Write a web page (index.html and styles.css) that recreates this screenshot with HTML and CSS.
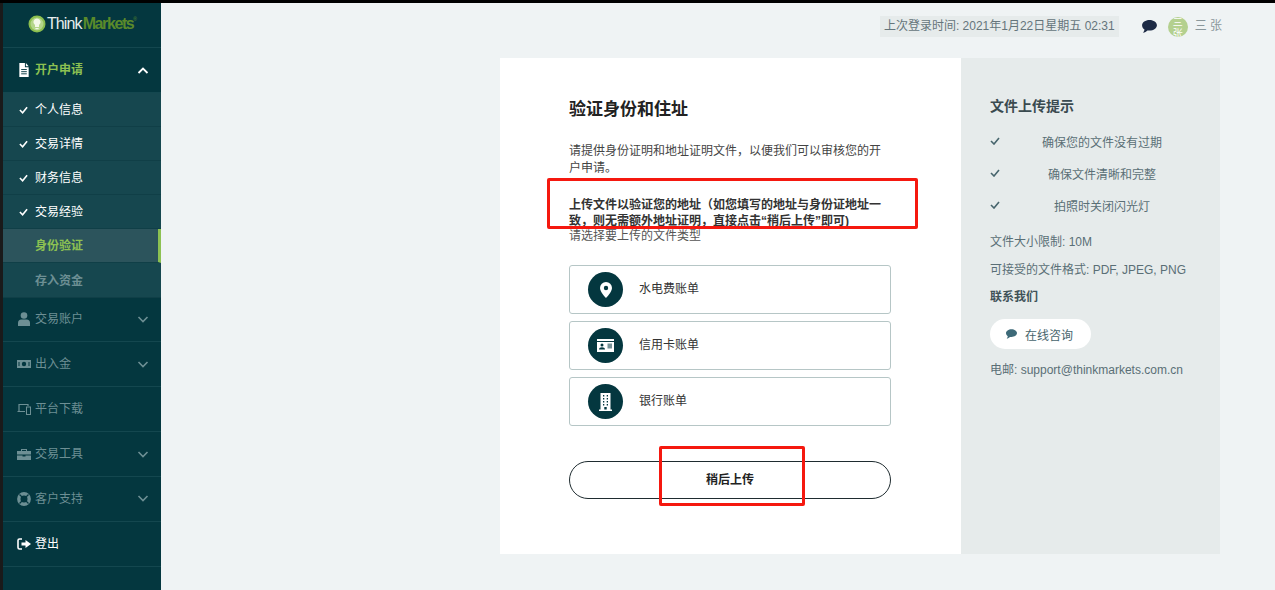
FILE: index.html
```html
<!DOCTYPE html>
<html lang="zh">
<head>
<meta charset="utf-8">
<title>ThinkMarkets</title>
<link rel="stylesheet" href="styles.css">
</head>
<body>
<div class="app">
  <aside class="sidebar">
    <div class="logo">
      <svg class="logo-mark" viewBox="0 0 18 18" width="18" height="18"><circle cx="9" cy="9" r="8.5" fill="#8cbf4f"/><circle cx="9" cy="9" r="6.5" fill="#b4d68a"/><path d="M9 3.5a3.6 3.6 0 0 0-2 6.6V12h4v-1.9a3.6 3.6 0 0 0-2-6.6zM7.4 13h3.2v1.2H7.4z" fill="#f3f8e8"/></svg>
      <span class="logo-think">Think</span><span class="logo-markets">Markets</span><sup class="logo-reg">®</sup>
    </div>
    <div class="nav-item open">
      <svg class="nav-icon" viewBox="0 0 12 15"><path d="M1 0h6v4.5h4V15H1zM8 0l3 3.500H8z" fill="#fff"/><path d="M3 7h6M3 9.300h6M3 11.600h6" stroke="#04373f" stroke-width="1"/></svg>
      <span class="nav-label">开户申请</span>
      <svg class="chev" viewBox="0 0 12 7"><path d="M1.500 6 6 1.500 10.500 6" fill="none" stroke="#fff" stroke-width="1.800"/></svg>
    </div>
    <div class="sub done"><svg class="tick" viewBox="0 0 10 8"><path d="M1 4l3 3 5-6" fill="none" stroke="#fff" stroke-width="1.800"/></svg><span>个人信息</span></div>
    <div class="sub done"><svg class="tick" viewBox="0 0 10 8"><path d="M1 4l3 3 5-6" fill="none" stroke="#fff" stroke-width="1.800"/></svg><span>交易详情</span></div>
    <div class="sub done"><svg class="tick" viewBox="0 0 10 8"><path d="M1 4l3 3 5-6" fill="none" stroke="#fff" stroke-width="1.800"/></svg><span>财务信息</span></div>
    <div class="sub done"><svg class="tick" viewBox="0 0 10 8"><path d="M1 4l3 3 5-6" fill="none" stroke="#fff" stroke-width="1.800"/></svg><span>交易经验</span></div>
    <div class="sub current"><span>身份验证</span></div>
    <div class="sub pending"><span>存入资金</span></div>
    <div class="nav-item">
      <svg class="nav-icon" viewBox="0 0 14 14"><circle cx="7" cy="3.500" r="3.300" fill="#6d8f94"/><path d="M1 14v-3a3.500 3.500 0 0 1 3.500-3.500h5A3.500 3.500 0 0 1 13 11v3z" fill="#6d8f94"/></svg>
      <span class="nav-label">交易账户</span>
      <svg class="chev" viewBox="0 0 12 7"><path d="M1.500 1 6 5.500 10.500 1" fill="none" stroke="#6d8f94" stroke-width="1.600"/></svg>
    </div>
    <div class="nav-item">
      <svg class="nav-icon" viewBox="0 0 14 10"><path d="M0 1h14v8H0z" fill="#6d8f94"/><circle cx="7" cy="5" r="2.200" fill="#04373f"/><path d="M2 3v4M12 3v4" stroke="#04373f"/></svg>
      <span class="nav-label">出入金</span>
      <svg class="chev" viewBox="0 0 12 7"><path d="M1.500 1 6 5.500 10.500 1" fill="none" stroke="#6d8f94" stroke-width="1.600"/></svg>
    </div>
    <div class="nav-item">
      <svg class="nav-icon" viewBox="0 0 14 12"><path d="M2 8V1.500h9V3M.5 8.500H8" fill="none" stroke="#6d8f94" stroke-width="1.200"/><rect x="9.500" y="4" width="4" height="7.500" fill="none" stroke="#6d8f94"/></svg>
      <span class="nav-label">平台下载</span>
    </div>
    <div class="nav-item">
      <svg class="nav-icon" viewBox="0 0 14 12"><path d="M4 3V1h6v2h4v3.500H0V3zM5 3h4V2H5zM0 7.500h5.500v1h3v-1H14V12H0z" fill="#6d8f94" fill-rule="evenodd"/></svg>
      <span class="nav-label">交易工具</span>
      <svg class="chev" viewBox="0 0 12 7"><path d="M1.500 1 6 5.500 10.500 1" fill="none" stroke="#6d8f94" stroke-width="1.600"/></svg>
    </div>
    <div class="nav-item">
      <svg class="nav-icon" viewBox="0 0 14 14"><circle cx="7" cy="7" r="5.200" fill="none" stroke="#6d8f94" stroke-width="3.400"/><path d="M2.500 2.500l2.500 2.500M11.500 2.500 9 5M2.500 11.500 5 9M11.500 11.500 9 9" stroke="#04373f" stroke-width="1.200"/></svg>
      <span class="nav-label">客户支持</span>
      <svg class="chev" viewBox="0 0 12 7"><path d="M1.500 1 6 5.500 10.500 1" fill="none" stroke="#6d8f94" stroke-width="1.600"/></svg>
    </div>
    <div class="nav-item logout">
      <svg class="nav-icon" viewBox="0 0 14 12"><path d="M5 1H2.500A1.500 1.500 0 0 0 1 2.500v7A1.500 1.500 0 0 0 2.500 11H5" fill="none" stroke="#fff" stroke-width="1.600"/><path d="M4.500 4.500h4V2L14 6l-5.500 4V7.500h-4z" fill="#fff"/></svg>
      <span class="nav-label">登出</span>
    </div>
  </aside>
  <main class="main">
    <header class="topbar">
      <span class="last-login">上次登录时间: 2021年1月22日星期五 02:31</span>
      <svg class="chat" viewBox="0 0 16 14"><path d="M8 0c4.400 0 8 2.500 8 5.700s-3.600 5.700-8 5.700c-.8 0-1.500-.1-2.200-.2C4.600 12.300 3 13.300 1 13.600c.8-.9 1.500-2 1.600-3.300C1 9.200 0 7.500 0 5.700 0 2.500 3.600 0 8 0z" fill="#1d2a45"/></svg>
      <span class="avatar">三<br>张</span>
      <span class="username">三 张</span>
    </header>
    <section class="card">
      <div class="card-left">
        <h1 class="title">验证身份和住址</h1>
        <p class="intro">请提供身份证明和地址证明文件，以便我们可以审核您的开户申请。</p>
        <p class="strong">上传文件以验证您的地址（如您填写的地址与身份证地址一致，则无需额外地址证明，直接点击“稍后上传”即可)</p>
        <p class="choose">请选择要上传的文件类型</p>
        <div class="options">
          <div class="option">
            <span class="disc"><svg viewBox="0 0 12 16" width="12" height="16"><path d="M6 0a6 6 0 0 0-6 6c0 4 6 10 6 10s6-6 6-10a6 6 0 0 0-6-6zm0 8.200A2.200 2.200 0 1 1 6 3.800a2.200 2.200 0 0 1 0 4.400z" fill="#fff"/></svg></span>
            <span class="option-text">水电费账单</span>
          </div>
          <div class="option">
            <span class="disc"><svg viewBox="0 0 17 13" width="17" height="13"><path d="M0 0h17v13H0z" fill="#fff"/><path d="M0 2.500h17" stroke="#04373f"/><rect x="10.500" y="4.500" width="4.500" height="5" fill="#04373f" opacity=".55"/><circle cx="5" cy="6" r="1.500" fill="#04373f"/><path d="M2 10.500c0-1.500 1.300-2.300 3-2.300s3 .8 3 2.300z" fill="#04373f"/></svg></span>
            <span class="option-text">信用卡账单</span>
          </div>
          <div class="option">
            <span class="disc"><svg viewBox="0 0 13 18" width="13" height="18"><path d="M1.500 0h10v16.500h1.500V18H0v-1.500h1.500z" fill="#fff"/><path d="M4 2h1.300v1.500H4zM7.700 2H9v1.500H7.700zM4 5h1.300v1.500H4zM7.700 5H9v1.500H7.700zM4 8h1.300v1.500H4zM7.700 8H9v1.500H7.700zM4 11h1.300v1.500H4zM7.700 11H9v1.500H7.700zM5.300 14h2.400v2.500H5.300z" fill="#04373f"/></svg></span>
            <span class="option-text">银行账单</span>
          </div>
        </div>
        <button class="later">稍后上传</button>
      </div>
      <div class="card-right">
        <h2 class="tips-title">文件上传提示</h2>
        <ul class="tips">
          <li><svg class="tip-tick" viewBox="0 0 10 8"><path d="M1 4l3 3 5-6" fill="none" stroke="#47656d" stroke-width="1.600"/></svg><span>确保您的文件没有过期</span></li>
          <li><svg class="tip-tick" viewBox="0 0 10 8"><path d="M1 4l3 3 5-6" fill="none" stroke="#47656d" stroke-width="1.600"/></svg><span>确保文件清晰和完整</span></li>
          <li><svg class="tip-tick" viewBox="0 0 10 8"><path d="M1 4l3 3 5-6" fill="none" stroke="#47656d" stroke-width="1.600"/></svg><span>拍照时关闭闪光灯</span></li>
        </ul>
        <p class="info">文件大小限制: 10M</p>
        <p class="info">可接受的文件格式: PDF, JPEG, PNG</p>
        <p class="info contact">联系我们</p>
        <div class="chat-btn">
          <svg viewBox="0 0 16 14" width="11" height="10"><path d="M8 0c4.400 0 8 2.500 8 5.700s-3.600 5.700-8 5.700c-.8 0-1.500-.1-2.200-.2C4.600 12.300 3 13.300 1 13.600c.8-.9 1.500-2 1.600-3.300C1 9.200 0 7.500 0 5.700 0 2.500 3.600 0 8 0z" fill="#3d6a78"/></svg>
          <span>在线咨询</span>
        </div>
        <p class="info email">电邮: support@thinkmarkets.com.cn</p>
      </div>
    </section>
  </main>
</div>
<div class="mark mark-text"></div>
<div class="mark mark-button"></div>
</body>
</html>
```
FILE: styles.css
```css
* { box-sizing: border-box; }
html, body { margin: 0; height: 100%; overflow: hidden; }
body {
  background: #eff3f4;
  border-top: 3px solid #000;
  font-family: "Liberation Sans", "Noto Sans CJK SC", sans-serif;
  font-size: 12px;
  color: #333;
  position: relative;
}
.app { display: flex; height: 587px; }
.sidebar {
  width: 161px;
  flex: none;
  background: #04373f;
  border-left: 3px solid #1a1a1a;
  display: flex;
  flex-direction: column;
}
.logo {
  height: 45px;
  display: flex;
  align-items: center;
  padding: 0 0 3px 25px;
  border-bottom: 1px solid #14474f;
  font-size: 16px;
}
.logo-mark { margin-right: 1px; }
.logo-think { color: #e8eeee; letter-spacing: -.9px; }
.logo-markets { color: #5a8a2a; font-weight: 700; letter-spacing: -1.4px; margin-left: 1px; }
.logo-reg { color: #5a8a2a; font-size: 5px; align-self: flex-start; margin-top: 13px; }
.nav-item {
  height: 44.850px;
  display: flex;
  align-items: center;
  padding: 0 12px 0 14px;
  border-bottom: 1px solid #14474f;
  color: #6d8f94;
  flex: none;
}
.nav-icon { width: 14px; height: 14px; flex: none; }
.nav-label { margin-left: 4px; flex: 1; line-height: 16px; }
.chev { width: 12px; height: 7px; flex: none; }
.open { color: #8cc152; font-weight: 700; height: 45px; }
.logout { color: #fff; }
.sub {
  height: 34.100px;
  display: flex;
  align-items: center;
  padding-left: 16px;
  background: #16474f;
  border-bottom: 1px solid #103f47;
  color: #fff;
  flex: none;
}
.sub span { margin-left: 16px; padding-bottom: 2px; }
.tick { width: 9px; height: 8px; margin-right: -9px; }
.current { background: #2c545c; color: #8cc152; font-weight: 700; border-right: 3px solid #8cc152; }
.pending { color: #6d8f94; font-weight: 700; }
.main { flex: 1; min-width: 0; display: flex; flex-direction: column; }
.topbar {
  height: 55px;
  display: flex;
  align-items: flex-start;
  padding: 13px 52px 0 0;
  justify-content: flex-end;
  color: #78878c;
}
.last-login {
  background: #e6ebeb;
  height: 21px;
  line-height: 21px;
  padding: 0 4px;
  color: #65757b;
  margin-right: 23px;
  white-space: nowrap;
}
.chat { width: 15px; height: 13px; margin: 4px 11px 0 0; }
.avatar {
  width: 20px;
  height: 20px;
  border-radius: 50%;
  background: #b4d08f;
  color: #fff;
  overflow: hidden;
  font-size: 10px;
  line-height: 11px;
  text-align: center;
  margin-right: 7px;
  margin-top: 1px;
}
.username { line-height: 20px; font-size: 12px; letter-spacing: 0; color: #8a979b; margin-right: 1px; }
.card {
  margin-left: 339px;
  width: 720px;
  height: 496px;
  display: flex;
  background: #fff;
}
.card-left { width: 461px; padding: 42px 70px 0 69px; color: #3a4a4f; }
.title { margin: 0; font-size: 17px; line-height: 20px; font-weight: 700; color: #222; }
.intro { margin: 23px 0 0; line-height: 17px; color: #444; }
.strong { margin: 20px 0 0; font-weight: 700; line-height: 16px; color: #333; }
.choose { margin: 0; line-height: 14px; color: #555; }
.options { margin-top: 22px; display: flex; flex-direction: column; gap: 7px; }
.option {
  height: 49px;
  border: 1px solid #b6c6c6;
  border-radius: 3px;
  display: flex;
  align-items: center;
  padding-left: 18px;
  color: #333;
}
.option-text { padding-bottom: 4px; }
.disc {
  width: 35px;
  height: 35px;
  border-radius: 50%;
  background: #04373f;
  display: flex;
  align-items: center;
  justify-content: center;
  margin-right: 16px;
  flex: none;
}
.later {
  display: block;
  width: 322px;
  height: 38px;
  margin-top: 35px;
  padding: 0 0 4px;
  border: 1px solid #1f2c30;
  border-radius: 19px;
  background: #fff;
  font: 700 12px "Liberation Sans", "Noto Sans CJK SC", sans-serif;
  color: #222;
}
.card-right { flex: 1; background: #e6ebeb; padding: 40px 0 0 29px; color: #5a6f76; }
.tips-title { margin: 0; font-size: 14px; line-height: 16px; font-weight: 700; color: #3a4a4f; }
.tips { list-style: none; margin: 11px 0 0; padding: 0; }
.tips li { display: flex; align-items: center; height: 32px; width: 214px; }
.tip-tick { width: 10px; height: 8px; flex: none; }
.tips li span { flex: 1; text-align: center; }
.info { margin: 0; line-height: 16px; margin-top: 12px; }
.tips + .info { margin-top: 13px; }
.contact { font-weight: 700; color: #3f5258; margin-top: 11px; }
.chat-btn {
  margin-top: 14px;
  width: 101px;
  height: 30px;
  background: #fff;
  border-radius: 15px;
  display: flex;
  align-items: center;
  padding-left: 16px;
  gap: 8px;
  color: #47656d;
}
.email { margin-top: 13px; }
.mark { position: absolute; border: 3px solid #f5180f; border-radius: 2px; }
.mark-text { left: 547px; top: 175px; width: 371px; height: 51px; }
.mark-button { left: 659px; top: 443px; width: 146px; height: 60px; }
```
